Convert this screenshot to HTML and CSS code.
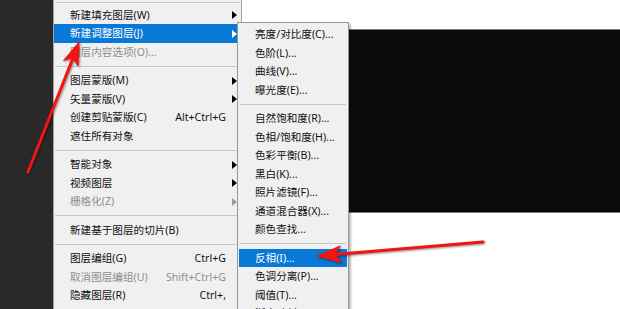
FILE: index.html
```html
<!DOCTYPE html>
<html lang="zh-CN">
<head>
<meta charset="utf-8">
<title>新建调整图层</title>
<link rel="stylesheet" href="styles.css">
</head>
<body>
<div class="page">
  <div class="dark"></div>
  <div class="menu main">
    <div class="sep"></div>
    <div class="item"><span class="label">新建填充图层(W)</span><span class="key"></span><i class="arr"></i></div>
    <div class="item hl"><span class="label">新建调整图层(J)</span><span class="key"></span><i class="arr"></i></div>
    <div class="item dis"><span class="label">图层内容选项(O)...</span><span class="key"></span><i></i></div>
    <div class="sep"></div>
    <div class="item"><span class="label">图层蒙版(M)</span><span class="key"></span><i class="arr"></i></div>
    <div class="item"><span class="label">矢量蒙版(V)</span><span class="key"></span><i class="arr"></i></div>
    <div class="item"><span class="label">创建剪贴蒙版(C)</span><span class="key">Alt+Ctrl+G</span><i></i></div>
    <div class="item"><span class="label">遮住所有对象</span><span class="key"></span><i></i></div>
    <div class="sep"></div>
    <div class="item"><span class="label">智能对象</span><span class="key"></span><i class="arr"></i></div>
    <div class="item"><span class="label">视频图层</span><span class="key"></span><i class="arr"></i></div>
    <div class="item dis"><span class="label">栅格化(Z)</span><span class="key"></span><i class="arr"></i></div>
    <div class="sep"></div>
    <div class="item"><span class="label">新建基于图层的切片(B)</span><span class="key"></span><i></i></div>
    <div class="sep"></div>
    <div class="item"><span class="label">图层编组(G)</span><span class="key">Ctrl+G</span><i></i></div>
    <div class="item dis"><span class="label">取消图层编组(U)</span><span class="key">Shift+Ctrl+G</span><i></i></div>
    <div class="item"><span class="label">隐藏图层(R)</span><span class="key">Ctrl+,</span><i></i></div>
  </div>
  <div class="canvas">
    <div class="doc"></div>
  </div>

  <div class="menu submenu">
    <div class="item"><span class="label">亮度/对比度(C)...</span></div>
    <div class="item"><span class="label">色阶(L)...</span></div>
    <div class="item"><span class="label">曲线(V)...</span></div>
    <div class="item"><span class="label">曝光度(E)...</span></div>
    <div class="sep"></div>
    <div class="item"><span class="label">自然饱和度(R)...</span></div>
    <div class="item"><span class="label">色相/饱和度(H)...</span></div>
    <div class="item"><span class="label">色彩平衡(B)...</span></div>
    <div class="item"><span class="label">黑白(K)...</span></div>
    <div class="item"><span class="label">照片滤镜(F)...</span></div>
    <div class="item"><span class="label">通道混合器(X)...</span></div>
    <div class="item"><span class="label">颜色查找...</span></div>
    <div class="sep"></div>
    <div class="item hl"><span class="label">反相(I)...</span></div>
    <div class="item"><span class="label">色调分离(P)...</span></div>
    <div class="item"><span class="label">阈值(T)...</span></div>
    <div class="item"><span class="label">渐变映射(G)...</span></div>
  </div>

  <svg class="marks" width="620" height="309" viewBox="0 0 620 309">
    <g class="arrow">
      <line x1="28" y1="172" x2="73" y2="58"/>
      <polygon points="79,42 78,66 72.8,57.8 63.5,60.5"/>
    </g>
    <g class="arrow">
      <line x1="483" y1="242" x2="335" y2="254.5"/>
      <polygon points="317,256 340.2,246 334.9,254.5 341.6,262.5"/>
    </g>
  </svg>
</div>
</body>
</html>
```

FILE: styles.css
```css
html, body {
  margin: 0;
  padding: 0;
}

body {
  width: 620px;
  height: 309px;
  overflow: hidden;
  background: #ffffff;
  font-family: "Noto Sans", "Noto Sans CJK SC", sans-serif;
  font-size: 10.6px;
  color: #111111;
}

.page {
  position: relative;
  display: flex;
  width: 620px;
  height: 309px;
  overflow: hidden;
}

.dark {
  width: 53px;
  flex: none;
  background: #292929;
}

.menu {
  background: #f0f0f0;
  box-sizing: border-box;
}

.main {
  width: 189px;
  flex: none;
  border-left: 1px solid #a3a3a3;
  border-right: 1px solid #a3a3a3;
  padding-top: 1.5px;
}

.item {
  display: grid;
  grid-template-columns: 1fr auto 15px;
  align-items: center;
  height: 18.5px;
  padding-left: 16px;
  white-space: nowrap;
  line-height: 18.5px;
}

.key {
  text-align: right;
}

.arr {
  display: block;
  width: 0;
  height: 0;
  margin-left: 6px;
  border-left: 5px solid #000000;
  border-top: 4.5px solid transparent;
  border-bottom: 4.5px solid transparent;
}

.item.hl {
  background: #0a78d6;
  color: #ffffff;
}

.item.hl .arr {
  border-left-color: #ffffff;
}

.item.dis {
  color: #8e8e8e;
}

.item.dis .arr {
  border-left-color: #9a9a9a;
}

.sep {
  height: 1px;
  margin: 4.5px 1px;
  background: #c6c6c6;
}

.main .sep:first-child {
  margin-top: 0;
  margin-bottom: 3.25px;
}

.canvas {
  flex: 1;
  padding-top: 29px;
}

.doc {
  height: 182px;
  background: #0a0a0a;
  border-top: 1px solid #7c7c7c;
  border-bottom: 1px solid #7c7c7c;
}

.submenu {
  position: absolute;
  left: 237px;
  top: 22px;
  width: 112px;
  border: 1px solid #979797;
  padding: 2px 1px;
  box-shadow: 2px 2px 2px rgba(0, 0, 0, 0.28);
}

.submenu .item {
  grid-template-columns: 1fr;
}

.marks {
  position: absolute;
  left: 0;
  top: 0;
  pointer-events: none;
}

.arrow {
  filter: drop-shadow(1.5px 1.5px 1px rgba(0, 0, 0, 0.45));
}

.arrow line {
  stroke: #f51414;
  stroke-width: 3;
  stroke-linecap: round;
}

.arrow polygon {
  fill: #f51414;
  stroke: #f51414;
  stroke-width: 1;
  stroke-linejoin: round;
}
```
